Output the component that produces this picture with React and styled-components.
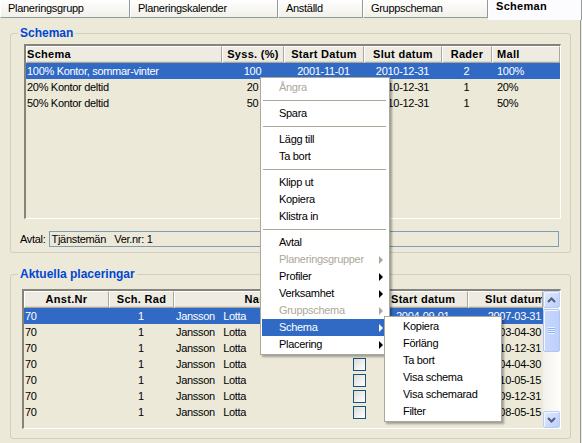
import React from 'react';
import styled, { createGlobalStyle } from 'styled-components';

const GlobalStyle = createGlobalStyle`
  html, body { margin: 0; padding: 0; background: #ECE9D8; }
  body { font-family: "Liberation Sans", Arial, sans-serif; font-size: 11px; }
  * { box-sizing: border-box; }
`;

const Window = styled.div`
  position: relative;
  width: 582px;
  height: 443px;
  overflow: hidden;
  background: #ECE9D8;
  font-family: "Liberation Sans", Arial, sans-serif;
  font-size: 11px;
  letter-spacing: -0.3px;
  color: #000;
  display: flex;
  flex-direction: column;
`;

const TabBar = styled.div`
  display: flex;
  height: 20px;
  flex: none;
`;

const Tab = styled.div`
  flex: ${p => (p.$w ? 'none' : '1')};
  width: ${p => (p.$w ? `${p.$w}px` : 'auto')};
  height: ${p => (p.$active ? 20 : 18)}px;
  padding-left: 7px;
  border-left: 1px solid #fff;
  border-right: 1px solid #919b9c;
  border-bottom: ${p => (p.$active ? 'none' : '1px solid #919b9c')};
  background: ${p => (p.$active ? '#fcfcfe' : 'linear-gradient(#fefefd, #f1f0ea)')};
  font-weight: ${p => (p.$active ? 700 : 400)};
  letter-spacing: ${p => (p.$active ? '0.3px' : '-0.3px')};
  line-height: ${p => (p.$active ? '12px' : '17px')};
  white-space: nowrap;
`;

const Panel = styled.div`
  flex: 1;
  display: flex;
  flex-direction: column;
  padding: 6px 9px 0 10px;
  border-right: 1px solid #919b9c;
  margin-right: 1px;
`;

const Group = styled.fieldset`
  margin: 0;
  padding: 0;
  min-width: 0;
  border: 1px solid #d0d0bf;
  border-radius: 3px;
  & + & {
    margin-top: 14px;
  }
`;

const GroupTitle = styled.legend`
  margin-left: 7px;
  padding: 0 2px;
  font-size: 12px;
  font-weight: 700;
  line-height: 14px;
  letter-spacing: 0;
  color: #0046d5;
`;

const GroupBody = styled.div`
  padding: ${p => p.$pad};
  display: flex;
  flex-direction: column;
`;

const ListFrame = styled.div`
  height: ${p => p.$h}px;
  margin-left: ${p => p.$ml || 0}px;
  border-style: solid;
  border-width: 2px 1px 1px 2px;
  border-color: #85837a #ffffff #ffffff #85837a;
  display: flex;
  overflow: hidden;
`;

const ListBody = styled.div`
  flex: 1;
  min-width: 0;
  display: flex;
  flex-direction: column;
  overflow: hidden;
`;

const HeaderRow = styled.div`
  display: grid;
  grid-template-columns: ${p => p.$cols};
  height: 17px;
  flex: none;
`;

const HeaderCell = styled.div`
  border-top: 1px solid #fff;
  border-left: 1px solid #fff;
  border-right: 1px solid #aca899;
  border-bottom: 1px solid #aca899;
  box-shadow: inset 0 -1px 0 #dcd8ca;
  background: #eeece2;
  font-weight: 700;
  letter-spacing: 0.3px;
  line-height: 15px;
  text-align: ${p => p.$align || 'center'};
  padding-left: ${p => p.$pl ?? 0}px;
  white-space: nowrap;
  overflow: hidden;
`;

const Row = styled.div`
  display: grid;
  grid-template-columns: ${p => p.$cols};
  height: 16px;
  line-height: 16px;
  flex: none;
  background: ${p => (p.$sel ? '#316ac5' : 'transparent')};
  color: ${p => (p.$sel ? '#fff' : '#000')};
`;

const Cell = styled.div`
  text-align: ${p => p.$align || 'left'};
  padding: 0 ${p => p.$pr ?? 2}px 0 ${p => p.$pl ?? 1}px;
  white-space: pre;
  overflow: hidden;
  display: flex;
  align-items: center;
  justify-content: ${p =>
    p.$align === 'center' ? 'center' : p.$align === 'right' ? 'flex-end' : 'flex-start'};
`;

const Check = styled.span`
  width: 13px;
  height: 13px;
  margin-left: 6px;
  border: 1px solid #1c5180;
  background: linear-gradient(135deg, #dcdcd7, #ffffff);
`;

const ScrollBar = styled.div`
  width: 17px;
  flex: none;
  display: flex;
  flex-direction: column;
  background: linear-gradient(to right, #f3f1ec, #fefefb);
`;

const ScrollButton = styled.div`
  width: 17px;
  height: 17px;
  flex: none;
  border: 1px solid #b9cdf7;
  border-radius: 2px;
  box-shadow: inset 1px 1px 0 #f3f7ff;
  background: linear-gradient(135deg, #e0e9fe, #bccff8);
  display: flex;
  align-items: center;
  justify-content: center;
`;

const Thumb = styled.div`
  height: 43px;
  margin-top: 1px;
  flex: none;
  border: 1px solid #b1c6f6;
  border-radius: 2px;
  box-shadow: inset 1px 1px 0 #f3f7ff;
  background: linear-gradient(to right, #c9d8fc, #bdd0fa);
  display: flex;
  align-items: center;
  justify-content: center;
`;

const Grip = styled.span`
  width: 7px;
  height: 7px;
  background: repeating-linear-gradient(to bottom, #eef4fe 0 1px, #8cb0f8 1px 2px);
`;

const Spacer = styled.div`
  flex: 1;
`;

const FieldRow = styled.div`
  margin-top: 12px;
  display: flex;
  align-items: center;
  gap: 3px;
  height: 16px;
`;

const FieldLabel = styled.span`
  white-space: nowrap;
`;

const FieldBox = styled.div`
  flex: 1;
  height: 16px;
  margin-right: 2px;
  border: 1px solid #7f9db9;
  padding-left: 2px;
  line-height: 14px;
  white-space: pre;
`;

const Menu = styled.div`
  position: absolute;
  left: ${p => p.$x}px;
  top: ${p => p.$y}px;
  width: ${p => p.$w}px;
  background: #fff;
  border: 1px solid #aca899;
  padding: 1px 2px 1px 1px;
  box-shadow: 2px 2px 2px rgba(0, 0, 0, 0.32);
  z-index: 2;
`;

const MenuItem = styled.div`
  height: 17px;
  line-height: 17px;
  padding: 0 4px 0 17px;
  display: flex;
  align-items: center;
  justify-content: space-between;
  white-space: nowrap;
  color: ${p => (p.$disabled ? '#aca899' : p.$active ? '#fff' : '#000')};
  background: ${p => (p.$active ? '#316ac5' : 'transparent')};
`;

const SubArrow = styled.span`
  width: 0;
  height: 0;
  border-left: 4px solid currentColor;
  border-top: 4px solid transparent;
  border-bottom: 4px solid transparent;
`;

const MenuSep = styled.div`
  height: 9px;
  display: flex;
  align-items: center;
  padding: 0 1px;
  &::after {
    content: '';
    flex: 1;
    height: 1px;
    background: #aca899;
  }
`;

const Chevron = ({ up }) => (
  <svg width="9" height="6" viewBox="0 0 9 6">
    <polyline
      points={up ? '1,5 4.5,1.5 8,5' : '1,1 4.5,4.5 8,1'}
      fill="none"
      stroke="#4d6185"
      strokeWidth="2"
    />
  </svg>
);

const tabs = [
  { label: 'Planeringsgrupp', w: 130 },
  { label: 'Planeringskalender', w: 148 },
  { label: 'Anställd', w: 85 },
  { label: 'Gruppscheman', w: 125 },
  { label: 'Scheman', active: true },
];

const cols1 = '196px 62px 80px 78px 50px 1fr';
const schemas = [
  ['100% Kontor, sommar-vinter', '100', '2001-11-01', '2010-12-31', '2', '100%'],
  ['20% Kontor deltid', '20', '2001-11-01', '2010-12-31', '1', '20%'],
  ['50% Kontor deltid', '50', '2001-11-01', '2010-12-31', '1', '50%'],
];

const cols2 = '85px 65px 173px 40px 81px 1fr';
const placements = [
  ['2004-09-01', '2007-03-31'],
  ['2002-05-01', '2003-04-30'],
  ['2005-01-01', '2010-12-31'],
  ['2003-05-01', '2004-04-30'],
  ['2008-01-01', '2010-05-15'],
  ['2007-01-01', '2009-12-31'],
  ['2007-06-01', '2008-05-15'],
];

const mainMenu = [
  { label: 'Ångra', disabled: true },
  'sep',
  { label: 'Spara' },
  'sep',
  { label: 'Lägg till' },
  { label: 'Ta bort' },
  'sep',
  { label: 'Klipp ut' },
  { label: 'Kopiera' },
  { label: 'Klistra in' },
  'sep',
  { label: 'Avtal' },
  { label: 'Planeringsgrupper', disabled: true, sub: true },
  { label: 'Profiler', sub: true },
  { label: 'Verksamhet', sub: true },
  { label: 'Gruppschema', disabled: true, sub: true },
  { label: 'Schema', sub: true, active: true },
  { label: 'Placering', sub: true },
];

const subMenu = ['Kopiera', 'Förläng', 'Ta bort', 'Visa schema', 'Visa schemarad', 'Filter'];

const renderMenu = items =>
  items.map((it, i) =>
    it === 'sep' ? (
      <MenuSep key={i} />
    ) : (
      <MenuItem key={i} $disabled={it.disabled} $active={it.active}>
        <span>{it.label}</span>
        {it.sub && <SubArrow />}
      </MenuItem>
    )
  );

export default function App() {
  return (
    <Window>
      <GlobalStyle />
      <TabBar>
        {tabs.map(t => (
          <Tab key={t.label} $w={t.w} $active={t.active}>
            {t.label}
          </Tab>
        ))}
      </TabBar>
      <Panel>
        <Group>
          <GroupTitle>Scheman</GroupTitle>
          <GroupBody $pad="4px 9px 5px 9px">
            <ListFrame $h={175} $ml={4}>
              <ListBody>
                <HeaderRow $cols={cols1}>
                  <HeaderCell $align="left">Schema</HeaderCell>
                  <HeaderCell>Syss. (%)</HeaderCell>
                  <HeaderCell>Start Datum</HeaderCell>
                  <HeaderCell>Slut datum</HeaderCell>
                  <HeaderCell>Rader</HeaderCell>
                  <HeaderCell $align="left" $pl={4}>Mall</HeaderCell>
                </HeaderRow>
                {schemas.map((r, i) => (
                  <Row key={i} $cols={cols1} $sel={i === 0}>
                    <Cell>{r[0]}</Cell>
                    <Cell $align="center">{r[1]}</Cell>
                    <Cell $align="center">{r[2]}</Cell>
                    <Cell $align="center">{r[3]}</Cell>
                    <Cell $align="center">{r[4]}</Cell>
                    <Cell $pl={5}>{r[5]}</Cell>
                  </Row>
                ))}
              </ListBody>
            </ListFrame>
            <FieldRow>
              <FieldLabel>Avtal:</FieldLabel>
              <FieldBox>{'Tjänstemän   Ver.nr: 1'}</FieldBox>
            </FieldRow>
          </GroupBody>
        </Group>
        <Group>
          <GroupTitle>Aktuella placeringar</GroupTitle>
          <GroupBody $pad="8px 9px 9px 11px">
            <ListFrame $h={140}>
              <ListBody>
                <HeaderRow $cols={cols2}>
                  <HeaderCell>Anst.Nr</HeaderCell>
                  <HeaderCell>Sch. Rad</HeaderCell>
                  <HeaderCell>Namn</HeaderCell>
                  <HeaderCell>Låst</HeaderCell>
                  <HeaderCell $align="left" $pl={3}>Start datum</HeaderCell>
                  <HeaderCell $align="left" $pl={16}>Slut datum</HeaderCell>
                </HeaderRow>
                {placements.map((p, i) => (
                  <Row key={i} $cols={cols2} $sel={i === 0}>
                    <Cell>70</Cell>
                    <Cell $align="center">1</Cell>
                    <Cell $pl={2}>{'Jansson   Lotta'}</Cell>
                    <Cell $pl={0}>
                      <Check />
                    </Cell>
                    <Cell $pl={9}>{p[0]}</Cell>
                    <Cell $align="right" $pr={2}>{p[1]}</Cell>
                  </Row>
                ))}
              </ListBody>
              <ScrollBar>
                <ScrollButton>
                  <Chevron up />
                </ScrollButton>
                <Thumb>
                  <Grip />
                </Thumb>
                <Spacer />
                <ScrollButton>
                  <Chevron />
                </ScrollButton>
              </ScrollBar>
            </ListFrame>
          </GroupBody>
        </Group>
      </Panel>
      <Menu $x={260} $y={77} $w={130}>
        {renderMenu(mainMenu)}
      </Menu>
      <Menu $x={384} $y={316} $w={118}>
        {subMenu.map(s => (
          <MenuItem key={s}>
            <span>{s}</span>
          </MenuItem>
        ))}
      </Menu>
    </Window>
  );
}
